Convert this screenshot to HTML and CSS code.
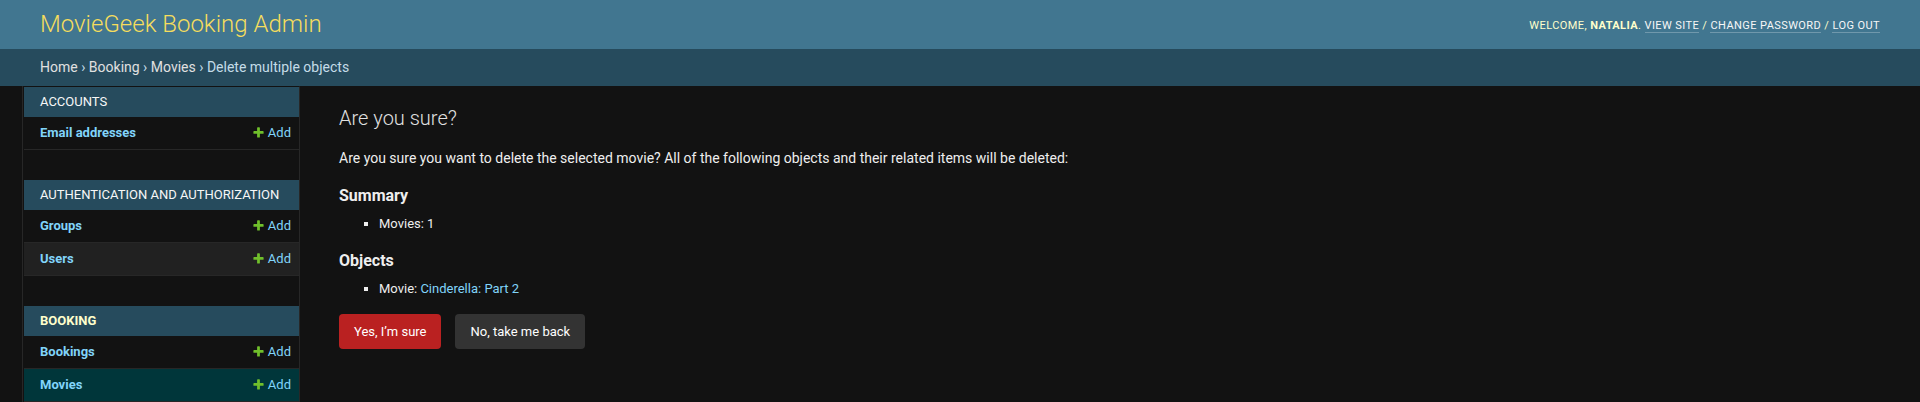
FILE: index.html
```html
<!DOCTYPE html>
<html lang="en">
<head>
<meta charset="utf-8">
<title>Are you sure? | MovieGeek Booking Admin</title>
<link rel="stylesheet" href="styles.css">
</head>
<body>
<div class="container">
  <header class="header">
    <h1 class="branding"><a href="#">MovieGeek Booking Admin</a></h1>
    <div class="user-tools">
      Welcome, <strong>Natalia</strong>.
      <a href="#">View site</a> /
      <a href="#">Change password</a> /
      <a href="#">Log out</a>
    </div>
  </header>
  <nav class="breadcrumbs">
    <a href="#">Home</a> › <a href="#">Booking</a> › <a href="#">Movies</a> › Delete multiple objects
  </nav>
  <div class="main">
    <button class="toggle-nav" type="button" aria-label="Toggle navigation"></button>
    <nav class="sidebar">
      <div class="module">
        <div class="caption">Accounts</div>
        <div class="row"><a class="model" href="#">Email addresses</a><a class="addlink" href="#"><svg width="13" height="13" viewBox="0 0 1792 1792"><path fill="#70bf2b" d="M1600 796v192q0 40-28 68t-68 28h-416v416q0 40-28 68t-68 28h-192q-40 0-68-28t-28-68v-416h-416q-40 0-68-28t-28-68v-192q0-40 28-68t68-28h416v-416q0-40 28-68t68-28h192q40 0 68 28t28 68v416h416q40 0 68 28t28 68z"/></svg>Add</a></div>
      </div>
      <div class="module">
        <div class="caption">Authentication and Authorization</div>
        <div class="row"><a class="model" href="#">Groups</a><a class="addlink" href="#"><svg width="13" height="13" viewBox="0 0 1792 1792"><path fill="#70bf2b" d="M1600 796v192q0 40-28 68t-68 28h-416v416q0 40-28 68t-68 28h-192q-40 0-68-28t-28-68v-416h-416q-40 0-68-28t-28-68v-192q0-40 28-68t68-28h416v-416q0-40 28-68t68-28h192q40 0 68 28t28 68v416h416q40 0 68 28t28 68z"/></svg>Add</a></div>
        <div class="row row-hover"><a class="model" href="#">Users</a><a class="addlink" href="#"><svg width="13" height="13" viewBox="0 0 1792 1792"><path fill="#70bf2b" d="M1600 796v192q0 40-28 68t-68 28h-416v416q0 40-28 68t-68 28h-192q-40 0-68-28t-28-68v-416h-416q-40 0-68-28t-28-68v-192q0-40 28-68t68-28h416v-416q0-40 28-68t68-28h192q40 0 68 28t28 68v416h416q40 0 68 28t28 68z"/></svg>Add</a></div>
      </div>
      <div class="module">
        <div class="caption current">Booking</div>
        <div class="row"><a class="model" href="#">Bookings</a><a class="addlink" href="#"><svg width="13" height="13" viewBox="0 0 1792 1792"><path fill="#70bf2b" d="M1600 796v192q0 40-28 68t-68 28h-416v416q0 40-28 68t-68 28h-192q-40 0-68-28t-28-68v-416h-416q-40 0-68-28t-28-68v-192q0-40 28-68t68-28h416v-416q0-40 28-68t68-28h192q40 0 68 28t28 68v416h416q40 0 68 28t28 68z"/></svg>Add</a></div>
        <div class="row row-selected"><a class="model" href="#">Movies</a><a class="addlink" href="#"><svg width="13" height="13" viewBox="0 0 1792 1792"><path fill="#70bf2b" d="M1600 796v192q0 40-28 68t-68 28h-416v416q0 40-28 68t-68 28h-192q-40 0-68-28t-28-68v-416h-416q-40 0-68-28t-28-68v-192q0-40 28-68t68-28h416v-416q0-40 28-68t68-28h192q40 0 68 28t28 68v416h416q40 0 68 28t28 68z"/></svg>Add</a></div>
      </div>
    </nav>
    <main class="content">
      <h1 class="title">Are you sure?</h1>
      <p>Are you sure you want to delete the selected movie? All of the following objects and their related items will be deleted:</p>
      <h2>Summary</h2>
      <ul>
        <li>Movies: 1</li>
      </ul>
      <h2>Objects</h2>
      <ul>
        <li>Movie: <a href="#">Cinderella: Part 2</a></li>
      </ul>
      <form class="actions">
        <button class="btn-delete" type="button">Yes, I’m sure</button>
        <a class="btn-cancel" href="#">No, take me back</a>
      </form>
    </main>
  </div>
</div>
</body>
</html>
```
FILE: styles.css
```css
html, body {
  margin: 0;
  padding: 0;
  height: 100%;
  overflow: hidden;
}
*, *::before, *::after { box-sizing: border-box; }

body {
  font-family: Roboto, "Liberation Sans", sans-serif;
  font-size: 14px;
  color: #eeeeee;
  background: #121212;
}

a { text-decoration: none; color: #81d4fa; }

.container {
  display: flex;
  flex-direction: column;
  height: 100%;
}

.header {
  display: flex;
  justify-content: space-between;
  align-items: center;
  padding: 10px 40px;
  background: #417690;
  color: #ffffcc;
  height: 49px;
}

.branding {
  margin: 0;
  font-size: 24px;
  font-weight: 300;
  line-height: 29px;
}
.branding a { color: #f5dd5d; }

.user-tools {
  font-size: 11px;
  font-weight: 400;
  letter-spacing: 0.42px;
  text-transform: uppercase;
  color: #ffffcc;
  padding-top: 2px;
}
.user-tools strong { font-weight: 700; color: #ffffcc; }
.user-tools a {
  color: #f7f7f7;
  border-bottom: 1px solid rgba(255, 255, 255, 0.25);
}

.breadcrumbs {
  background: #264b5d;
  padding: 10px 40px;
  height: 37px;
  line-height: 17px;
  font-size: 14px;
  color: #c4dce8;
}
.breadcrumbs a { color: #e0e0e0; }

.main {
  display: flex;
  flex: 1 1 auto;
  min-height: 0;
}

.toggle-nav {
  flex: 0 0 23px;
  width: 23px;
  border: 0;
  border-right: 1px solid #272727;
  background: #121212;
  padding: 0;
  margin: 0;
}

.sidebar {
  flex: 0 0 277px;
  padding-left: 1px;
  border-top: 1px solid transparent;
  border-right: 1px solid #272727;
  background: #121212;
  overflow: hidden;
}

.module {
  margin-bottom: 30px;
}

.caption {
  background: #264b5d;
  color: #f7f7f7;
  font-size: 13px;
  font-weight: 400;
  text-transform: uppercase;
  white-space: nowrap;
  line-height: 14px;
  padding: 8px 8px 8px 16px;
  height: 30px;
}
.caption.current {
  color: #ffffcc;
  font-weight: 700;
}

.row {
  display: flex;
  justify-content: space-between;
  align-items: flex-start;
  height: 33px;
  padding: 8px 8px 8px 16px;
  border-bottom: 1px solid #272727;
  font-size: 13px;
  line-height: 16px;
}
.row-hover { background: #212121; }
.row-selected { background: #00363a; }

.model { font-weight: 700; color: #81d4fa; }

.addlink {
  display: flex;
  align-items: flex-start;
  color: #81d4fa;
}
.addlink svg {
  margin: 1px 3px 0 0;
  flex: none;
}

.content {
  flex: 1 1 auto;
  padding: 20px 40px 20px 39px;
}

.title {
  margin: 0 0 20px;
  font-size: 20px;
  font-weight: 300;
  color: #e0e0e0;
}

.content p {
  margin: 2.8px 0 20px;
  font-size: 14px;
}

.content h2 {
  margin: 16px 0 8px;
  font-size: 16px;
  font-weight: 700;
  color: #eeeeee;
}

.content ul {
  margin: 4px 0 11.2px;
  padding-left: 40px;
}
.content li {
  list-style-type: square;
  font-size: 13px;
  line-height: 20px;
  padding: 1px 0;
}

.actions {
  display: flex;
  gap: 14px;
  margin-top: 14px;
}

.btn-delete,
.btn-cancel {
  font-family: inherit;
  font-size: 13px;
  line-height: 15px;
  height: 35px;
  padding: 10px 15px;
  border-radius: 4px;
  border: 0;
  color: #ffffff;
  cursor: pointer;
}
.btn-delete { background: #ba2121; }
.btn-cancel { background: #333333; display: inline-block; }
```
